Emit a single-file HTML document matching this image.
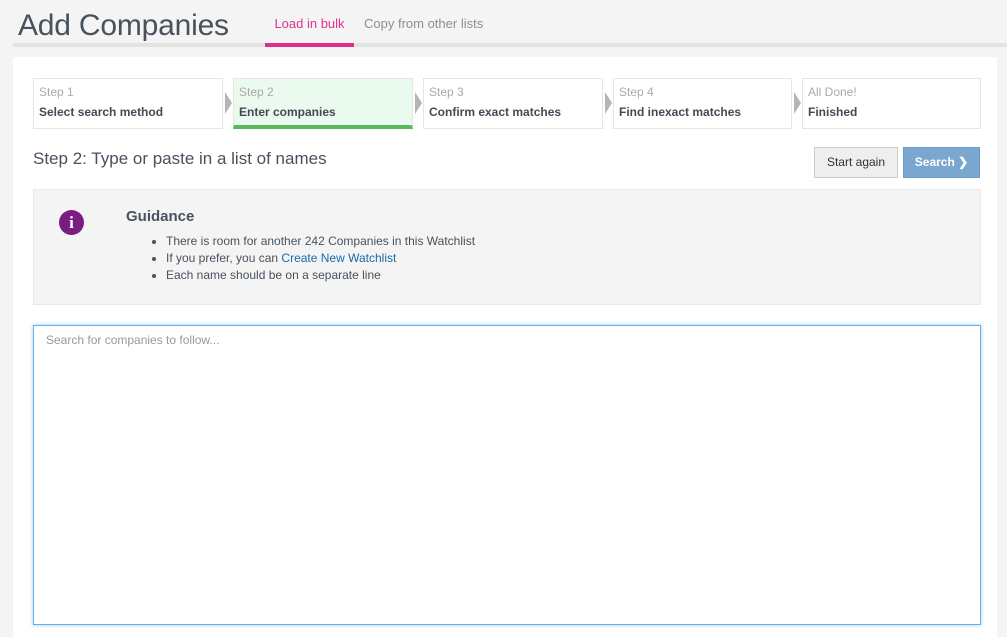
<!DOCTYPE html>
<html><head><style>
body{margin:0;width:1007px;height:632px;background:#f4f4f4;font-family:"Liberation Sans",sans-serif;position:relative;overflow:hidden}
.abs{position:absolute}
h1{position:absolute;left:18px;top:9px;margin:0;font-weight:normal;font-size:30px;color:#47525d;letter-spacing:-0.2px}
.tabline{left:13px;top:43px;width:994px;height:4px;background:#e3e3e3}
.panel{left:13px;top:57px;width:984px;height:580px;background:#fff}
.step{position:absolute;top:78px;height:51px;border:1px solid #e6e6e6;background:#fff;box-sizing:border-box;padding:6px 5px}
.step .a{font-size:12px;color:#aaa}
.step .b{font-size:12px;color:#424b55;font-weight:bold;margin-top:6px}
.arr{position:absolute;top:92px;width:0;height:0;border-top:11px solid transparent;border-bottom:11px solid transparent;border-left:7px solid #b5b5b5}
</style></head><body>
<h1>Add Companies</h1>
<div class="abs tabline"></div>
<div class="abs" style="left:265px;top:16px;width:89px;text-align:center;font-size:13px;color:#e0338a">Load in bulk</div>
<div class="abs" style="left:265px;top:43px;width:89px;height:4px;background:#de2d86"></div>
<div class="abs" style="left:364px;top:16px;font-size:13px;color:#8a8f95">Copy from other lists</div>
<div class="abs panel"></div>
<div class="step" style="left:33px;width:190px"><div class="a">Step 1</div><div class="b">Select search method</div></div>
<div class="arr" style="left:225px"></div>
<div class="step" style="left:233px;width:180px;background:#eafaee;border-bottom:4px solid #5cb85c"><div class="a">Step 2</div><div class="b">Enter companies</div></div>
<div class="arr" style="left:415px"></div>
<div class="step" style="left:423px;width:180px"><div class="a">Step 3</div><div class="b">Confirm exact matches</div></div>
<div class="arr" style="left:605px"></div>
<div class="step" style="left:613px;width:179px"><div class="a">Step 4</div><div class="b">Find inexact matches</div></div>
<div class="arr" style="left:794px"></div>
<div class="step" style="left:802px;width:179px"><div class="a">All Done!</div><div class="b">Finished</div></div>
<div class="abs" style="left:33px;top:149px;font-size:17px;color:#47525d">Step 2: Type or paste in a list of names</div>
<div class="abs" style="left:814px;top:147px;width:84px;height:31px;box-sizing:border-box;border:1px solid #ccc;background:#eee;font-size:12px;color:#333;text-align:center;line-height:29px">Start again</div>
<div class="abs" style="left:903px;top:147px;width:77px;height:31px;box-sizing:border-box;background:#7aa7d0;border:1px solid #6f9cc6;font-size:12px;color:#fff;font-weight:bold;text-align:center;line-height:29px">Search &#x276F;</div>
<div class="abs" style="left:33px;top:189px;width:948px;height:116px;box-sizing:border-box;background:#f4f4f4;border:1px solid #e8e8e8"></div>
<div class="abs" style="left:59px;top:210px;width:25px;height:25px;border-radius:50%;background:#7b1c80;color:#fff;font-family:'Liberation Serif',serif;font-weight:bold;font-size:17px;text-align:center;line-height:25px">i</div>
<div class="abs" style="left:126px;top:208px;font-size:15px;font-weight:bold;color:#47525d">Guidance</div>
<ul class="abs" style="left:126px;top:233px;margin:0;padding-left:40px;font-size:12px;color:#47525d;line-height:17px;list-style:disc">
<li>There is room for another 242 Companies in this Watchlist</li>
<li>If you prefer, you can <span style="color:#1a6aa8">Create New Watchlist</span></li>
<li>Each name should be on a separate line</li></ul>
<div class="abs" style="left:33px;top:325px;width:948px;height:300px;box-sizing:border-box;border:1px solid #66afe9;box-shadow:0 0 4px rgba(102,175,233,.6);background:#fff"></div>
<div class="abs" style="left:46px;top:333px;font-size:12px;color:#999">Search for companies to follow...</div>
</body></html>
